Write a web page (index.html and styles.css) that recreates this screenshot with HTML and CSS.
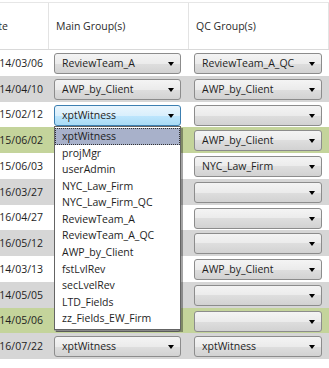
FILE: index.html
```html
<!DOCTYPE html>
<html lang="en">
<head>
    <meta charset="UTF-8">
    <title>Group Assignments</title>
    <link rel="stylesheet" href="styles.css">
</head>
<body>
    <div class="grid">
        <div class="head">
            <div class="hcell date-col">Date</div>
            <div class="hcell">Main Group(s)</div>
            <div class="hcell">QC Group(s)</div>
        </div>

        <div class="row">
            <div class="date">2014/03/06</div>
            <div class="cell"><div class="combo">ReviewTeam_A</div></div>
            <div class="cell qc"><div class="combo">ReviewTeam_A_QC</div></div>
        </div>
        <div class="row alt">
            <div class="date">2014/04/10</div>
            <div class="cell"><div class="combo">AWP_by_Client</div></div>
            <div class="cell qc"><div class="combo">AWP_by_Client</div></div>
        </div>
        <div class="row">
            <div class="date">2015/02/12</div>
            <div class="cell">
                <div class="combo open">xptWitness</div>
                <ul class="popup">
                    <li class="current">xptWitness</li>
                    <li>projMgr</li>
                    <li>userAdmin</li>
                    <li>NYC_Law_Firm</li>
                    <li>NYC_Law_Firm_QC</li>
                    <li>ReviewTeam_A</li>
                    <li>ReviewTeam_A_QC</li>
                    <li>AWP_by_Client</li>
                    <li>fstLvlRev</li>
                    <li>secLvelRev</li>
                    <li>LTD_Fields</li>
                    <li>zz_Fields_EW_Firm</li>
                </ul>
            </div>
            <div class="cell qc"><div class="combo"></div></div>
        </div>
        <!-- rows under the open list keep their combos, the list covers them -->
        <div class="row green">
            <div class="date">2015/06/02</div>
            <div class="cell"><div class="combo"></div></div>
            <div class="cell qc"><div class="combo">AWP_by_Client</div></div>
        </div>
        <div class="row">
            <div class="date">2015/06/03</div>
            <div class="cell"><div class="combo"></div></div>
            <div class="cell qc"><div class="combo">NYC_Law_Firm</div></div>
        </div>
        <div class="row alt">
            <div class="date">2016/03/27</div>
            <div class="cell"><div class="combo"></div></div>
            <div class="cell qc"><div class="combo"></div></div>
        </div>
        <div class="row">
            <div class="date">2016/04/27</div>
            <div class="cell"><div class="combo"></div></div>
            <div class="cell qc"><div class="combo"></div></div>
        </div>
        <div class="row alt">
            <div class="date">2016/05/12</div>
            <div class="cell"><div class="combo"></div></div>
            <div class="cell qc"><div class="combo"></div></div>
        </div>
        <div class="row">
            <div class="date">2014/03/13</div>
            <div class="cell"><div class="combo"></div></div>
            <div class="cell qc"><div class="combo">AWP_by_Client</div></div>
        </div>
        <div class="row alt">
            <div class="date">2014/05/05</div>
            <div class="cell"><div class="combo"></div></div>
            <div class="cell qc"><div class="combo"></div></div>
        </div>
        <div class="row green">
            <div class="date">2014/05/06</div>
            <div class="cell"><div class="combo"></div></div>
            <div class="cell qc"><div class="combo"></div></div>
        </div>
        <div class="row alt">
            <div class="date">2016/07/22</div>
            <div class="cell"><div class="combo">xptWitness</div></div>
            <div class="cell qc"><div class="combo">xptWitness</div></div>
        </div>
    </div>
</body>
</html>
```

FILE: styles.css
```css
body {
    margin: 0;
    background: #fff;
    font-family: "Open Sans", "Noto Sans", sans-serif;
    font-size: 10.5px;
    color: #1e1e1e;
}

.grid {
    width: 329px;
    overflow: hidden;
    padding-top: 2px;
}

.head,
.row {
    display: grid;
    grid-template-columns: 49px 140px 140px;
}

.head {
    height: 46px;
    border-top: 1px solid #e6e6e6;
    border-bottom: 1px solid #d9d9d9;
    color: #2a2a2a;
}

.hcell {
    display: flex;
    align-items: center;
    padding-left: 7px;
    border-right: 1px solid #e3e3e3;
    white-space: nowrap;
    overflow: hidden;
}

.hcell.date-col {
    justify-content: flex-end;
    padding: 0 40px 0 0;
}

.row {
    height: 25.75px;
}

.row.alt {
    background: #d6d6d6;
}

.row.green {
    background: #c4d49b;
}

.date {
    display: flex;
    align-items: center;
    justify-content: flex-end;
    padding-right: 6px;
    white-space: nowrap;
    overflow: hidden;
}

.cell {
    position: relative;
    padding: 3px 0 0 5px;
}

.combo {
    position: relative;
    box-sizing: border-box;
    width: 127px;
    height: 21px;
    padding: 0 0 0 7px;
    line-height: 19px;
    border: 1px solid #8c8c8c;
    border-radius: 3px;
    background: linear-gradient(#f4f4f4, #ebebeb 50%, #dedede 50%, #d2d2d2);
    white-space: nowrap;
}

.qc .combo {
    width: 128px;
}

.combo::after {
    content: "";
    position: absolute;
    right: 6px;
    top: 8px;
    border-left: 3px solid transparent;
    border-right: 3px solid transparent;
    border-top: 4px solid #000;
}

.combo.open {
    border-color: #3c7fb1;
    background: linear-gradient(#e9f5fd, #d9effc 50%, #bee6fd 50%, #a9dbf6);
}

.popup {
    position: absolute;
    z-index: 2;
    left: 5px;
    top: 24px;
    box-sizing: border-box;
    width: 127px;
    margin: 0;
    padding: 1px 0 2px;
    list-style: none;
    background: #fff;
    border: 1px solid #646464;
    box-shadow: 2px 2px 0 rgba(0, 0, 0, 0.35);
}

.popup li {
    height: 16.6px;
    line-height: 16.6px;
    padding-left: 7px;
    white-space: nowrap;
}

.popup li.current {
    height: 17px;
    background: #a8b1ca;
    outline: 1px dotted #333;
    outline-offset: -1px;
}
```
